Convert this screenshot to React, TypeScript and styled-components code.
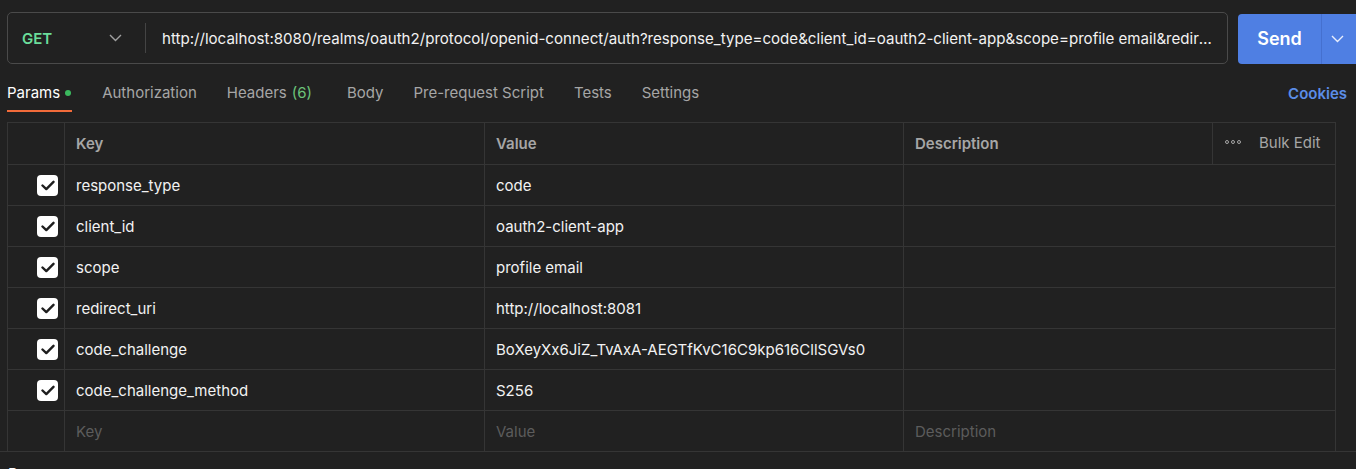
import React from "react";
import styled, { createGlobalStyle } from "styled-components";

const Global = createGlobalStyle`
  html, body { margin: 0; padding: 0; background: #212121; overflow: hidden; }
  body { font-family: Inter, "Noto Sans", sans-serif; color: #ffffff; -webkit-font-smoothing: antialiased; }
  * { box-sizing: border-box; }
`;

const Page = styled.div`
  width: 1356px;
  height: 469px;
  overflow: hidden;
`;

const RequestBar = styled.div`
  display: flex;
  align-items: center;
  padding: 12px 0 0 7px;
  gap: 10px;
`;

const UrlBox = styled.div`
  width: 1221px;
  height: 52px;
  border: 1px solid #4a4a4a;
  border-radius: 5px;
  display: flex;
  align-items: center;
`;

const MethodSelect = styled.div`
  width: 138px;
  height: 30px;
  display: flex;
  align-items: center;
  justify-content: space-between;
  padding: 0 23px 0 14px;
  border-right: 1px solid #444;
`;

const Method = styled.span`
  color: #6bdd9a;
  font-weight: 600;
  font-size: 15px;
`;

const UrlText = styled.div`
  flex: 1;
  padding: 0 9px 0 16px;
  font-size: 15.1px;
  color: #f2f2f2;
  white-space: nowrap;
  overflow: hidden;
  text-overflow: ellipsis;
`;

const SendGroup = styled.div`
  width: 130px;
  height: 50px;
  background: #4f7fe3;
  border-radius: 4px 0 0 4px;
  display: flex;
  align-items: center;
  margin-top: 1px;
`;

const SendLabel = styled.div`
  width: 84px;
  font-weight: 600;
  font-size: 18px;
  color: #fff;
  border-right: 1px solid #4570cf;
  height: 100%;
  display: flex;
  align-items: center;
  justify-content: center;
`;

const SendArrow = styled.div`
  flex: 1;
  display: flex;
  align-items: center;
  justify-content: center;
  padding-right: 4px;
`;

const TabsBar = styled.div`
  display: flex;
  align-items: flex-end;
  justify-content: space-between;
  padding: 0 9px 0 7px;
  height: 48px;
`;

const Tabs = styled.div`
  display: flex;
  align-items: flex-end;
  gap: 30px;
`;

const Tab = styled.div<{ $active?: boolean; $extra?: number }>`
  height: 40px;
  display: flex;
  align-items: center;
  font-size: 15px;
  margin-left: ${(p) => p.$extra ?? 0}px;
  color: ${(p) => (p.$active ? "#ffffff" : "#a6a6a6")};
  border-bottom: 2px solid ${(p) => (p.$active ? "#f26b3a" : "transparent")};
  padding-top: 2px;
`;

const Dot = styled.span`
  width: 6px;
  height: 6px;
  border-radius: 50%;
  background: #3bb95e;
  margin: 1px 1px 0 5px;
`;

const Count = styled.span`
  color: #6cc47a;
  margin-left: 5px;
`;

const Cookies = styled.div`
  height: 40px;
  display: flex;
  align-items: center;
  padding-top: 2px;
  color: #5b8de8;
  font-weight: 600;
  font-size: 15px;
`;

const Table = styled.div`
  margin: 10px 0 0 7px;
  width: 1329px;
  display: grid;
  grid-template-columns: 57px 420px 419px 309px 1fr;
  border-left: 1px solid #353535;
  border-top: 1px solid #353535;
  border-right: 1px solid #353535;
`;

const Cell = styled.div<{ $span?: number; $h?: number; $end?: boolean }>`
  grid-column: span ${(p) => p.$span ?? 1};
  height: ${(p) => p.$h ?? 41}px;
  border-bottom: 1px solid #353535;
  border-right: ${(p) => (p.$end ? "none" : "1px solid #353535")};
  display: flex;
  align-items: center;
  padding: 0 11px;
  font-size: 15px;
  color: #f2f2f2;
`;

const CheckCell = styled(Cell)`
  justify-content: flex-end;
  padding: 0 6px 0 0;
`;

const HeadCell = styled(Cell)`
  color: #a6a6a6;
  font-weight: 600;
`;

const BulkCell = styled(Cell)`
  color: #a6a6a6;
  padding: 0 0 3px 12px;
  gap: 18px;
`;

const Placeholder = styled.span`
  color: #5c5c5c;
`;

const Box = styled.div`
  width: 21px;
  height: 21px;
  border-radius: 4px;
  background: #ffffff;
  display: flex;
  align-items: center;
  justify-content: center;
`;

const Separator = styled.div`
  height: 1px;
  background: #353535;
  margin-top: -1px;
  width: 100%;
`;

const Footer = styled.div`
  padding: 13px 0 0 8px;
  font-size: 15px;
  line-height: 18px;
  color: #fff;
`;

const Chevron = ({ color }: { color: string }) => (
  <svg width="13" height="8" viewBox="0 0 13 8">
    <path d="M1 1l5.5 5.5L12 1" fill="none" stroke={color} strokeWidth="1.4" />
  </svg>
);

const Check = () => (
  <svg width="14" height="11" viewBox="0 0 14 11">
    <path d="M1.5 5.5l3.8 3.6L12.5 1.8" fill="none" stroke="#1e1e1e" strokeWidth="2.4" strokeLinecap="round" strokeLinejoin="round" />
  </svg>
);

const Dots = () => (
  <svg width="16" height="4" viewBox="0 0 16 4">
    {[2, 8, 14].map((x) => (
      <circle key={x} cx={x} cy="2" r="1.5" fill="none" stroke="#a6a6a6" strokeWidth="1" />
    ))}
  </svg>
);

const params: [string, string][] = [
  ["response_type", "code"],
  ["client_id", "oauth2-client-app"],
  ["scope", "profile email"],
  ["redirect_uri", "http://localhost:8081"],
  ["code_challenge", "BoXeyXx6JiZ_TvAxA-AEGTfKvC16C9kp616CllSGVs0"],
  ["code_challenge_method", "S256"],
];

const url =
  "http://localhost:8080/realms/oauth2/protocol/openid-connect/auth?response_type=code&client_id=oauth2-client-app&scope=profile email&redirect_uri=http://localhost:8081&code_challenge=BoXeyXx6JiZ_TvAxA-AEGTfKvC16C9kp616CllSGVs0&code_challenge_method=S256";

export default function App() {
  return (
    <Page>
      <Global />
      <RequestBar>
        <UrlBox>
          <MethodSelect>
            <Method>GET</Method>
            <Chevron color="#a0a0a0" />
          </MethodSelect>
          <UrlText>{url}</UrlText>
        </UrlBox>
        <SendGroup>
          <SendLabel>Send</SendLabel>
          <SendArrow>
            <Chevron color="#e8eefc" />
          </SendArrow>
        </SendGroup>
      </RequestBar>
      <TabsBar>
        <Tabs>
          <Tab $active>
            Params<Dot />
          </Tab>
          <Tab>Authorization</Tab>
          <Tab>
            Headers<Count>(6)</Count>
          </Tab>
          <Tab $extra={5}>Body</Tab>
          <Tab>Pre-request Script</Tab>
          <Tab>Tests</Tab>
          <Tab>Settings</Tab>
        </Tabs>
        <Cookies>Cookies</Cookies>
      </TabsBar>
      <Table>
        <HeadCell $h={42} />
        <HeadCell $h={42}>Key</HeadCell>
        <HeadCell $h={42}>Value</HeadCell>
        <HeadCell $h={42}>Description</HeadCell>
        <BulkCell $h={42} $end>
          <Dots />
          Bulk Edit
        </BulkCell>
        {params.map(([k, v]) => (
          <React.Fragment key={k}>
            <CheckCell>
              <Box>
                <Check />
              </Box>
            </CheckCell>
            <Cell>{k}</Cell>
            <Cell>{v}</Cell>
            <Cell $span={2} $end />
          </React.Fragment>
        ))}
        <Cell />
        <Cell>
          <Placeholder>Key</Placeholder>
        </Cell>
        <Cell>
          <Placeholder>Value</Placeholder>
        </Cell>
        <Cell $span={2} $end>
          <Placeholder>Description</Placeholder>
        </Cell>
      </Table>
      <Separator />
      <Footer>Response</Footer>
    </Page>
  );
}
